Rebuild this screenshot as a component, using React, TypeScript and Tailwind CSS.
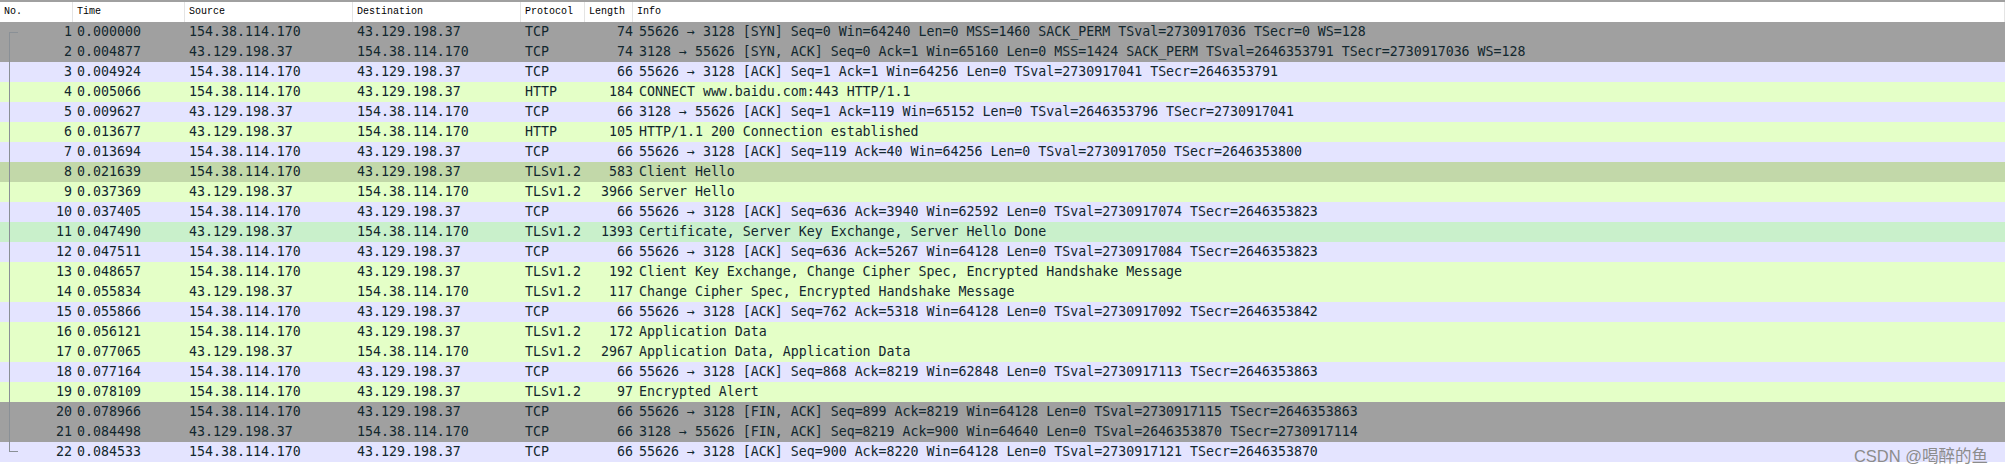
const rows = [
  ['1', '0.000000', 'a', 'TCP', '74', '55626 → 3128 [SYN] Seq=0 Win=64240 Len=0 MSS=1460 SACK_PERM TSval=2730917036 TSecr=0 WS=128', 'gray'],
  ['2', '0.004877', 'b', 'TCP', '74', '3128 → 55626 [SYN, ACK] Seq=0 Ack=1 Win=65160 Len=0 MSS=1424 SACK_PERM TSval=2646353791 TSecr=2730917036 WS=128', 'gray'],
  ['3', '0.004924', 'a', 'TCP', '66', '55626 → 3128 [ACK] Seq=1 Ack=1 Win=64256 Len=0 TSval=2730917041 TSecr=2646353791', 'tcp'],
  ['4', '0.005066', 'a', 'HTTP', '184', 'CONNECT www.baidu.com:443 HTTP/1.1', 'http'],
  ['5', '0.009627', 'b', 'TCP', '66', '3128 → 55626 [ACK] Seq=1 Ack=119 Win=65152 Len=0 TSval=2646353796 TSecr=2730917041', 'tcp'],
  ['6', '0.013677', 'b', 'HTTP', '105', 'HTTP/1.1 200 Connection established', 'http'],
  ['7', '0.013694', 'a', 'TCP', '66', '55626 → 3128 [ACK] Seq=119 Ack=40 Win=64256 Len=0 TSval=2730917050 TSecr=2646353800', 'tcp'],
  ['8', '0.021639', 'a', 'TLSv1.2', '583', 'Client Hello', 'hello'],
  ['9', '0.037369', 'b', 'TLSv1.2', '3966', 'Server Hello', 'http'],
  ['10', '0.037405', 'a', 'TCP', '66', '55626 → 3128 [ACK] Seq=636 Ack=3940 Win=62592 Len=0 TSval=2730917074 TSecr=2646353823', 'tcp'],
  ['11', '0.047490', 'b', 'TLSv1.2', '1393', 'Certificate, Server Key Exchange, Server Hello Done', 'cert'],
  ['12', '0.047511', 'a', 'TCP', '66', '55626 → 3128 [ACK] Seq=636 Ack=5267 Win=64128 Len=0 TSval=2730917084 TSecr=2646353823', 'tcp'],
  ['13', '0.048657', 'a', 'TLSv1.2', '192', 'Client Key Exchange, Change Cipher Spec, Encrypted Handshake Message', 'http'],
  ['14', '0.055834', 'b', 'TLSv1.2', '117', 'Change Cipher Spec, Encrypted Handshake Message', 'http'],
  ['15', '0.055866', 'a', 'TCP', '66', '55626 → 3128 [ACK] Seq=762 Ack=5318 Win=64128 Len=0 TSval=2730917092 TSecr=2646353842', 'tcp'],
  ['16', '0.056121', 'a', 'TLSv1.2', '172', 'Application Data', 'http'],
  ['17', '0.077065', 'b', 'TLSv1.2', '2967', 'Application Data, Application Data', 'http'],
  ['18', '0.077164', 'a', 'TCP', '66', '55626 → 3128 [ACK] Seq=868 Ack=8219 Win=62848 Len=0 TSval=2730917113 TSecr=2646353863', 'tcp'],
  ['19', '0.078109', 'a', 'TLSv1.2', '97', 'Encrypted Alert', 'http'],
  ['20', '0.078966', 'a', 'TCP', '66', '55626 → 3128 [FIN, ACK] Seq=899 Ack=8219 Win=64128 Len=0 TSval=2730917115 TSecr=2646353863', 'gray'],
  ['21', '0.084498', 'b', 'TCP', '66', '3128 → 55626 [FIN, ACK] Seq=8219 Ack=900 Win=64640 Len=0 TSval=2646353870 TSecr=2730917114', 'gray'],
  ['22', '0.084533', 'a', 'TCP', '66', '55626 → 3128 [ACK] Seq=900 Ack=8220 Win=64128 Len=0 TSval=2730917121 TSecr=2646353870', 'tcp'],
]

const rowBg: Record<string, string> = {
  gray: 'bg-[#a0a0a0]',
  tcp: 'bg-[#e4e4ff]',
  http: 'bg-[#e4ffc7]',
  hello: 'bg-[#c2d8a9]',
  cert: 'bg-[#c9f0cb]',
}

const headers = [
  { label: 'No.', w: 'w-[73px]' },
  { label: 'Time', w: 'w-[112px]' },
  { label: 'Source', w: 'w-[168px]' },
  { label: 'Destination', w: 'w-[168px]' },
  { label: 'Protocol', w: 'w-[64px]' },
  { label: 'Length', w: 'w-[48px]' },
  { label: 'Info', w: 'flex-1' },
]

export default function App() {
  return (
    <div className="relative h-[474px] w-[2005px] overflow-hidden bg-white font-['DejaVu_Sans_Mono',monospace] text-[13.28px] text-[#12272e]">
      <div className="h-[2px] bg-[#a0a0a0]" />

      {/* Column headers */}
      <div className="flex h-5 font-['Liberation_Mono',monospace] text-[10px] text-black">
        {headers.map((h) => (
          <div key={h.label} className={`${h.w} border-r border-[#e4e4e4] pl-1 leading-[20px]`}>
            {h.label}
          </div>
        ))}
      </div>

      {/* Packet rows */}
      {rows.map((r) => (
        <div key={r[0]} className={`flex h-5 items-center whitespace-pre ${rowBg[r[6]]}`}>
          <div className="w-[72px] text-right">{r[0]}</div>
          <div className="w-[112px] pl-[5px]">{r[1]}</div>
          <div className="w-[168px] pl-[5px]">{r[2] === 'a' ? '154.38.114.170' : '43.129.198.37'}</div>
          <div className="w-[168px] pl-[5px]">{r[2] === 'a' ? '43.129.198.37' : '154.38.114.170'}</div>
          <div className="w-[64px] pl-[5px]">{r[3]}</div>
          <div className="w-[49px] text-right">{r[4]}</div>
          <div className="flex-1 pl-[6px]">{r[5]}</div>
        </div>
      ))}

      {/* Conversation bracket */}
      <div className="absolute left-[9px] top-[32px] h-[420px] w-[9px] border-b border-l border-t border-[#8a9096]" />

      <div className="absolute right-[17px] top-[446px] font-['Liberation_Sans','Noto_Sans_CJK_SC',sans-serif] text-[16.5px] leading-[20px] text-[#8c8c8c]">
        CSDN @喝醉的鱼
      </div>
    </div>
  )
}
